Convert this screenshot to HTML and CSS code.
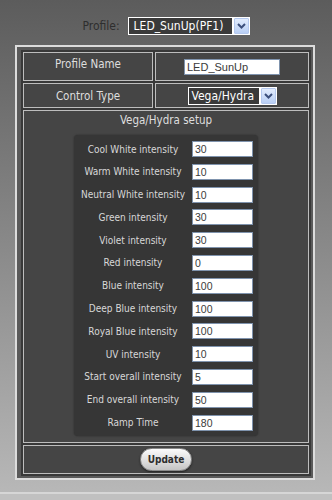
FILE: index.html
```html
<!DOCTYPE html>
<html lang="en">

<head>
    <meta charset="UTF-8">
    <title>Profile Setup</title>
    <link rel="stylesheet" href="styles.css">
</head>

<body>
    <div class="profile-bar">
        <span class="profile-label">Profile:</span>
        <div class="select select-profile">
            <span class="select-text">LED_SunUp(PF1)</span>
            <span class="select-btn">
                <svg width="9" height="6" viewBox="0 0 9 6"><path d="M1 1 L4.5 4.5 L8 1" fill="none" stroke="#3c4f7c" stroke-width="2"/></svg>
            </span>
        </div>
    </div>

    <div class="panel">
        <div class="setup-grid">
            <div class="cell label-cell first-label">Profile Name</div>
            <div class="cell value-cell">
                <input class="text-input name-input" type="text" value="LED_SunUp">
            </div>

            <div class="cell label-cell">Control Type</div>
            <div class="cell value-cell">
                <div class="select select-type">
                    <span class="select-text">Vega/Hydra</span>
                    <span class="select-btn">
                        <svg width="9" height="6" viewBox="0 0 9 6"><path d="M1 1 L4.5 4.5 L8 1" fill="none" stroke="#3c4f7c" stroke-width="2"/></svg>
                    </span>
                </div>
            </div>

            <!-- Vega/Hydra channel settings -->
            <div class="cell wide-cell setup-cell">
                <div class="setup-title">Vega/Hydra setup</div>
                <div class="intensity-box">
                    <div class="row-label">Cool White intensity</div>
                    <input class="text-input small-input" type="text" value="30">
                    <div class="row-label">Warm White intensity</div>
                    <input class="text-input small-input" type="text" value="10">
                    <div class="row-label">Neutral White intensity</div>
                    <input class="text-input small-input" type="text" value="10">
                    <div class="row-label">Green intensity</div>
                    <input class="text-input small-input" type="text" value="30">
                    <div class="row-label">Violet intensity</div>
                    <input class="text-input small-input" type="text" value="30">
                    <div class="row-label">Red intensity</div>
                    <input class="text-input small-input" type="text" value="0">
                    <div class="row-label">Blue intensity</div>
                    <input class="text-input small-input" type="text" value="100">
                    <div class="row-label">Deep Blue intensity</div>
                    <input class="text-input small-input" type="text" value="100">
                    <div class="row-label">Royal Blue intensity</div>
                    <input class="text-input small-input" type="text" value="100">
                    <div class="row-label">UV intensity</div>
                    <input class="text-input small-input" type="text" value="10">
                    <div class="row-label">Start overall intensity</div>
                    <input class="text-input small-input" type="text" value="5">
                    <div class="row-label">End overall intensity</div>
                    <input class="text-input small-input" type="text" value="50">
                    <div class="row-label">Ramp Time</div>
                    <input class="text-input small-input" type="text" value="180">
                </div>
            </div>

            <div class="cell wide-cell button-cell">
                <button class="update-btn">Update</button>
            </div>
        </div>
    </div>

    <div class="page-footer"></div>
</body>
</html>
```

FILE: styles.css
```css
html {
    background: #b8b8b8;
}

body {
    margin: 0;
    min-height: 500px;
    background: linear-gradient(#5c5c5c 0, #8a8a8a 250px, #b9b9b9 500px);
    font-family: "DejaVu Sans Condensed", "DejaVu Sans", sans-serif;
    font-stretch: condensed;
    color: #dedede;
}

.profile-bar {
    display: flex;
    justify-content: center;
    align-items: center;
    gap: 8px;
    padding-top: 17px;
    height: 18px;
}

.profile-label {
    font-size: 12px;
    color: #2e2e2e;
}

/* fake dropdowns */
.select {
    display: flex;
    align-items: stretch;
    gap: 2px;
    background: #fff;
    padding: 1px;
    box-sizing: border-box;
}

.select-text {
    flex: 1;
    background: #3a3a3a;
    color: #fff;
    font-family: "Liberation Sans Narrow", "DejaVu Sans Condensed", sans-serif;
    font-size: 12px;
    line-height: 16px;
    padding-left: 5px;
    white-space: nowrap;
    overflow: hidden;
}

.select-btn {
    width: 15px;
    display: flex;
    align-items: center;
    justify-content: center;
    background: linear-gradient(#e2ecfd, #b9cff5);
    border: 1px solid #b4c8ee;
    box-sizing: border-box;
    border-radius: 1px;
}

.select-profile {
    width: 122px;
    height: 18px;
}

.select-type {
    width: 89px;
    height: 18px;
}

.select-type .select-text {
    padding-left: 3px;
}

.panel {
    width: 300px;
    margin-left: 15px;
    margin-top: 10px;
    box-sizing: border-box;
    border: 2px solid #dcdcdc;
    padding: 3px 0 2px 4px;
    background: #5a5a5a;
}

.setup-grid {
    display: grid;
    grid-template-columns: 130px 154px;
    grid-template-rows: 29px 25px 333px 29px;
    gap: 2px;
    padding: 2px;
    background: #383838;
    width: max-content;
}

.cell {
    border: 1px solid #bdbdbd;
    box-sizing: border-box;
    background: #454545;
}

.wide-cell {
    grid-column: 1 / 3;
}

.label-cell {
    display: flex;
    align-items: center;
    justify-content: center;
    font-size: 11.5px;
}

.first-label {
    padding-bottom: 5px;
}

.value-cell {
    display: flex;
    align-items: center;
    justify-content: center;
}

.text-input {
    box-sizing: border-box;
    height: 16px;
    border: 1px solid #7f93ad;
    background: #fff;
    color: #3a3a3a;
    font-family: "Liberation Sans", sans-serif;
    font-size: 11px;
    padding: 0 2px;
    margin: 0;
    outline: none;
}

.name-input {
    width: 96px;
}

.setup-cell {
    display: flex;
    flex-direction: column;
    align-items: center;
}

.setup-title {
    padding-top: 2px;
    line-height: 14px;
    font-size: 11.5px;
    margin-bottom: 8px;
}

.intensity-box {
    display: grid;
    grid-template-columns: 108px 61px;
    grid-auto-rows: 16px;
    column-gap: 5px;
    row-gap: 6.8px;
    padding: 6px 5px 5px 5px;
    background: #363636;
    border-radius: 4px;
    box-shadow: 0 0 2px #2c2c2c;
}

.row-label {
    display: flex;
    align-items: center;
    justify-content: center;
    font-size: 10px;
    color: #d8d8d8;
    white-space: nowrap;
}

.small-input {
    width: 61px;
    font-size: 10.5px;
}

.button-cell {
    display: flex;
    align-items: center;
    justify-content: center;
}

.update-btn {
    width: 52px;
    height: 23px;
    border-radius: 12px;
    border: 1px solid #8a8a8a;
    background: linear-gradient(#fbfbfb, #dcdcdc 60%, #c4c4c4);
    box-shadow: 0 1px 2px #222;
    font-family: "DejaVu Sans Condensed", "DejaVu Sans", sans-serif;
    font-stretch: condensed;
    font-weight: bold;
    font-size: 10px;
    color: #2e2e2e;
    padding: 0;
}

.page-footer {
    margin-top: 12px;
    border-top: 2px solid #d6d6d6;
    height: 6px;
    background: #c0c0c0;
}
```
